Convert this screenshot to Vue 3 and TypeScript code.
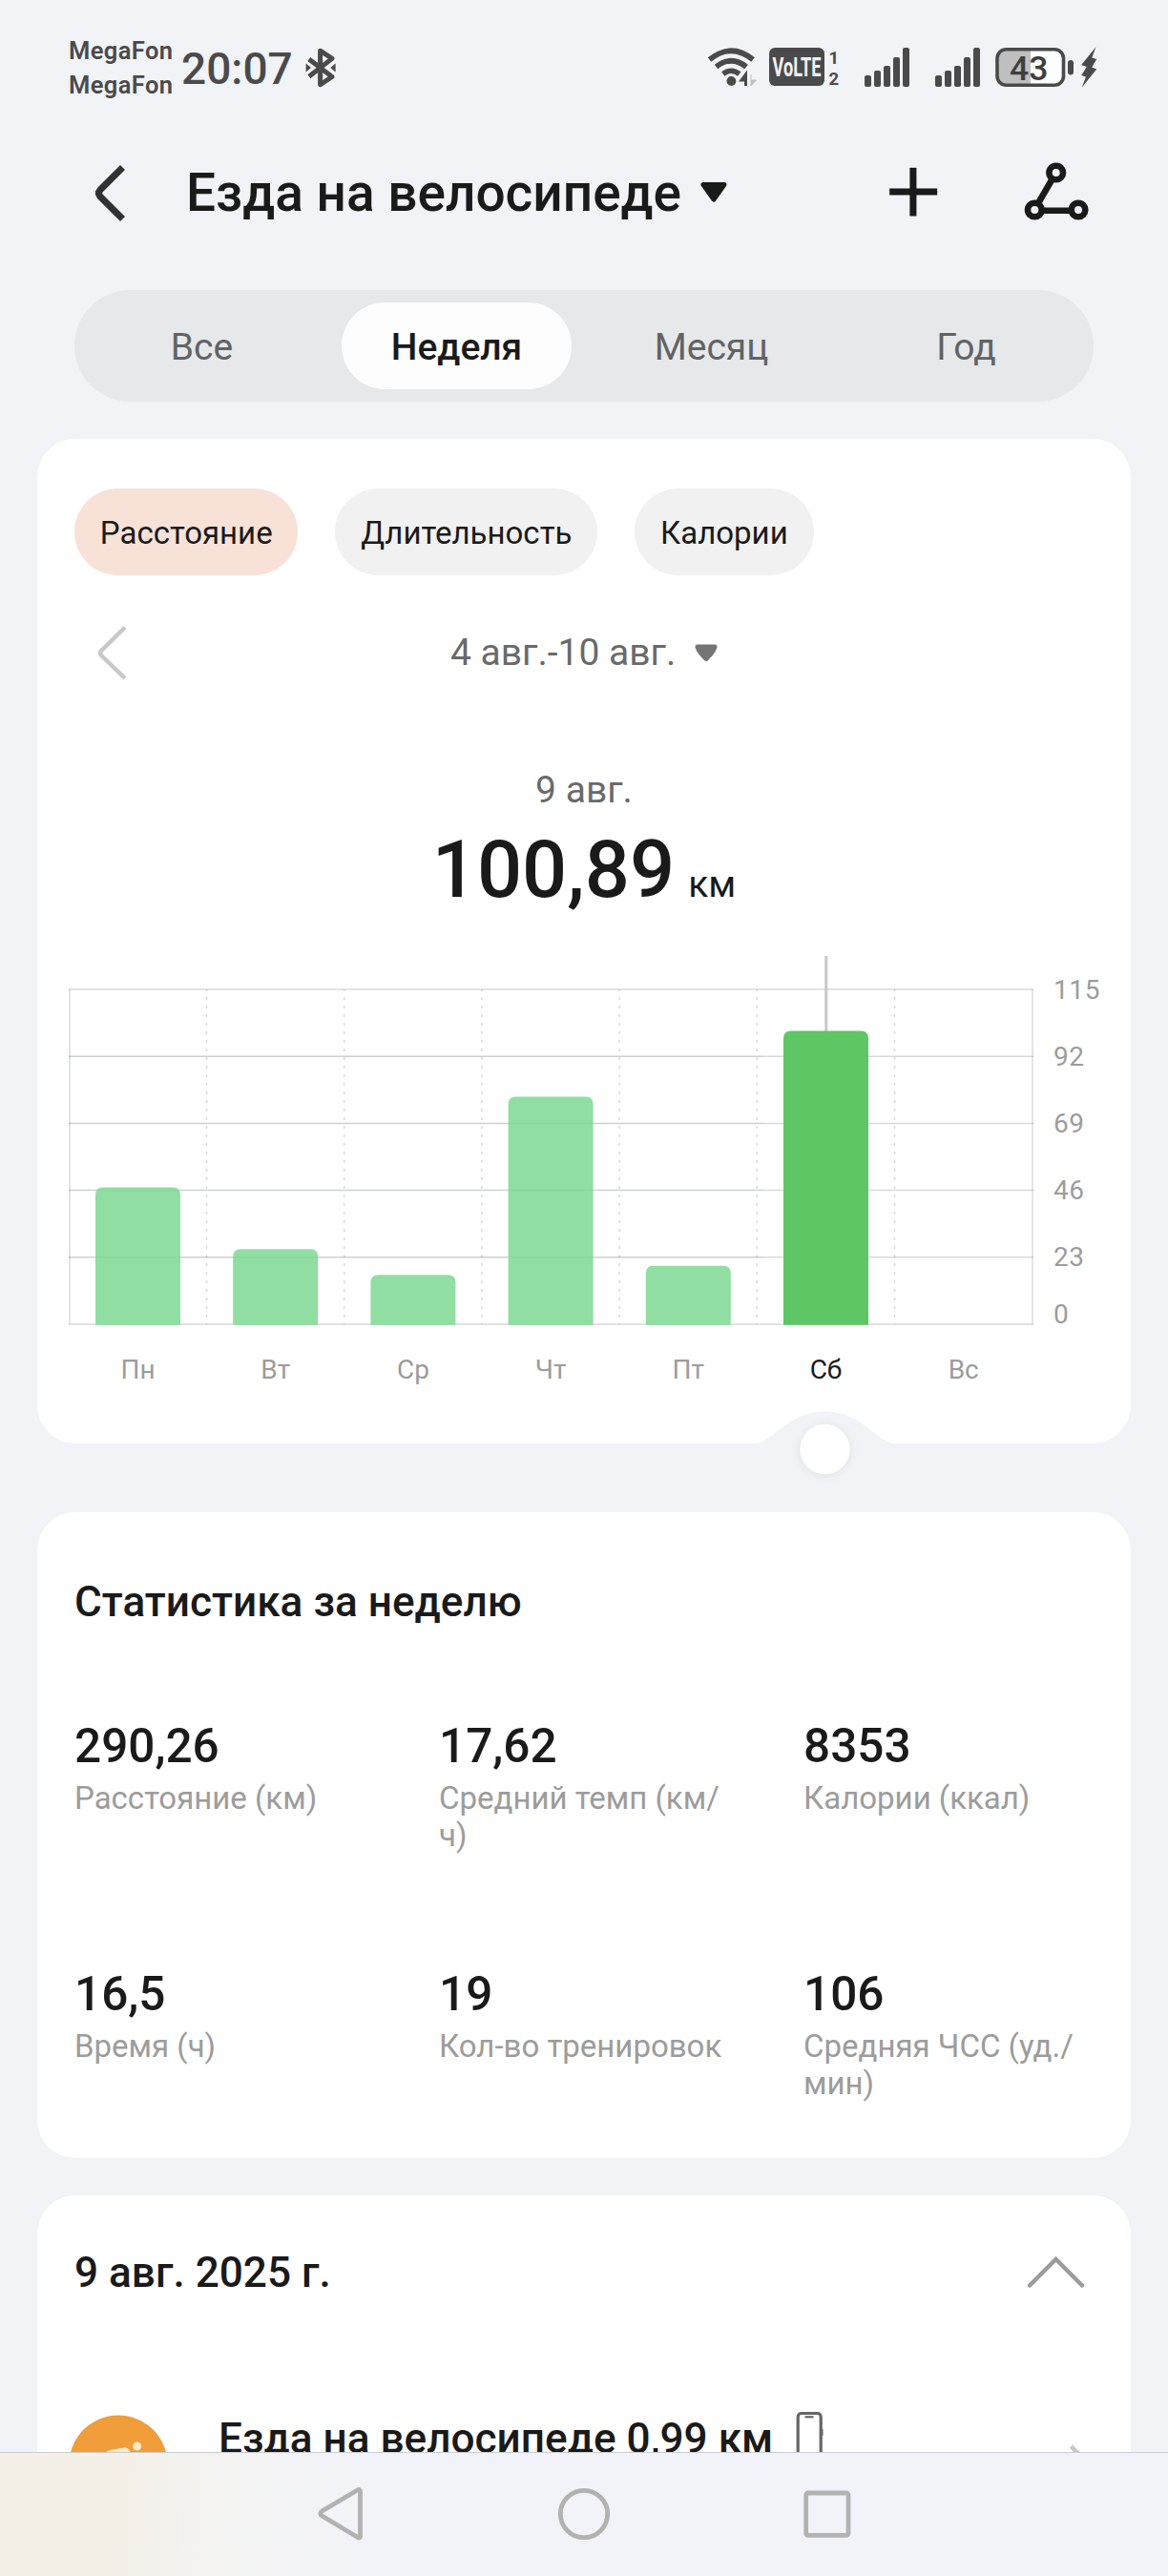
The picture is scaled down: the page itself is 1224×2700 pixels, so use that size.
<script setup lang="ts">
import { ref } from 'vue'

interface Day { label: string; value: number }
interface Stat { value: string; label: string }

const periods: string[] = ['Все', 'Неделя', 'Месяц', 'Год']
const activePeriod = ref(1)

const metrics: string[] = ['Расстояние', 'Длительность', 'Калории']
const activeMetric = ref(0)

const days: Day[] = [
  { label: 'Пн', value: 47.2 },
  { label: 'Вт', value: 26 },
  { label: 'Ср', value: 17.1 },
  { label: 'Чт', value: 78.3 },
  { label: 'Пт', value: 20.2 },
  { label: 'Сб', value: 100.89 },
  { label: 'Вс', value: 0 },
]
const selectedDay = ref(5)

/* Plot geometry, in the units of the chart's viewBox */
const left = 73
const step = 144.2
const bottom = 1388
const rowHeight = 70.2
const barWidth = 89
const ticks: number[] = [0, 23, 46, 69, 92, 115]

const gridY = (i: number): number => bottom - i * rowHeight
const center = (i: number): number => left + step * (i + 0.5) - 0.6
const barTop = (v: number): number => bottom + 0.5 - (v / 115) * rowHeight * 5
const barPath = (i: number, v: number): string => {
  const x = center(i) - barWidth / 2
  const r = 8
  return `M${x} ${bottom + 0.7}V${barTop(v) + r}q0 ${-r} ${r} ${-r}h${barWidth - 2 * r}q${r} 0 ${r} ${r}V${bottom + 0.7}z`
}

const stats: Stat[] = [
  { value: '290,26', label: 'Расстояние (км)' },
  { value: '17,62', label: 'Средний темп (км/\nч)' },
  { value: '8353', label: 'Калории (ккал)' },
  { value: '16,5', label: 'Время (ч)' },
  { value: '19', label: 'Кол-во тренировок' },
  { value: '106', label: 'Средняя ЧСС (уд./\nмин)' },
]

const signalHeights: number[] = [12, 17, 22, 31, 41]
</script>

<template>
  <div class="screen">
    <div class="content">
      <div class="status">
        <div class="carriers"><span>MegaFon</span><span>MegaFon</span></div>
        <div class="clock">20:07</div>
        <svg class="bt" width="34" height="42" viewBox="319 50 34 42">
          <path d="M323.8 62L348 80.5 335.6 88.6V53.2L348 61.4 323.8 80.2" fill="none" stroke="#4a4a4a" stroke-width="5" stroke-linejoin="round" />
          <path d="M320.6 66.5v9l5.4-4.5zM351.6 66.5v9l-5.4-4.5z" fill="#4a4a4a" />
        </svg>
        <div class="gap"></div>
        <svg class="wifi" width="52" height="42" viewBox="741 49 52 42">
          <g fill="none" stroke="#4a4a4a" stroke-width="5.6">
            <path d="M743.5 62.5q22.8-18.5 45.6 0" />
            <path d="M750.5 70q15.8-12.5 31.6 0" />
            <path d="M757.8 77.5q8.5-6.5 17 0" />
          </g>
          <circle cx="766.4" cy="85" r="4.9" fill="#4a4a4a" />
          <path d="M781.5 90V78l-4.500 6h4.500" fill="#4a4a4a" stroke="#4a4a4a" stroke-width="3" />
          <path d="M787 78v12l5.5-6H787" fill="#bdbec0" stroke="#bdbec0" stroke-width="1" />
        </svg>
        <svg class="volte" width="76" height="42" viewBox="805 49 76 42">
          <rect x="806" y="50" width="58" height="40" rx="6" fill="#4a4a4a" />
          <text x="809.5" y="79.5" textLength="51" lengthAdjust="spacingAndGlyphs" font-size="27" font-weight="700" fill="#f1f3f7">VoLTE</text>
          <text x="868.5" y="66.500" font-size="18.500" font-weight="700" fill="#4a4a4a">1</text>
          <text x="868.5" y="88.500" font-size="18.500" font-weight="700" fill="#4a4a4a">2</text>
        </svg>
        <div v-for="n in 2" :key="n" class="signal">
          <i v-for="h in signalHeights" :key="h" :style="{ height: h + 'px' }"></i>
        </div>
        <svg class="battery" width="108" height="44" viewBox="1042 48 108 44">
          <rect x="1045" y="52" width="70" height="37" rx="9" fill="#fdfdfd" />
          <path d="M1080 52h-26q-9 0-9 9v19q0 9 9 9h26z" fill="#bfbfc0" />
          <rect x="1045" y="51.7" width="69.5" height="37.6" rx="9.5" fill="none" stroke="#4a4a4a" stroke-width="3.6" />
          <rect x="1119" y="63" width="6" height="15.5" rx="3" fill="#4a4a4a" />
          <text x="1058" y="84" font-size="35.5" font-weight="500" fill="#3f3f3f">43</text>
          <path d="M1148.500 49.300L1133.200 68l5.600 2-5.600 9 4.800 1.500-4.200 11 15.400-19-5-2 5-8.500-5-1.500z" fill="#4a4a4a" />
        </svg>
      </div>

      <header class="header">
        <svg class="back" width="40" height="64" viewBox="96 170 40 64">
          <path d="M128.500 175.500L105 199q-3 3.500 0 7l23.500 23.500" fill="none" stroke="#303231" stroke-width="7" />
        </svg>
        <h1>Езда на велосипеде</h1>
        <svg class="caret" width="30" height="24" viewBox="733 190 30 24">
          <path d="M737 193.500h22l-11 15.500z" fill="#1a1a1a" stroke="#1a1a1a" stroke-width="5" stroke-linejoin="round" />
        </svg>
        <div class="gap"></div>
        <svg class="plus" width="52" height="52" viewBox="931 174.500 52 52">
          <path d="M932.300 197.200h49.700v6.600h-49.700zM953.600 175.500h6.600v50.300h-6.600z" fill="#1a1a1a" stroke="#1a1a1a" stroke-width=".4" stroke-linejoin="round" />
        </svg>
        <svg class="route" width="70" height="64" viewBox="1072 168 70 64">
          <g fill="none" stroke="#1a1a1a" stroke-width="6.600">
            <path d="M1102.500 188l-14.500 25M1092 220.700h30" />
            <circle cx="1106.700" cy="181" r="7.300" />
            <circle cx="1084.300" cy="220" r="7.300" />
            <circle cx="1130" cy="220" r="7.300" />
          </g>
        </svg>
      </header>

      <nav class="periods">
        <button v-for="(p, i) in periods" :key="p" :class="{ on: i === activePeriod }" @click="activePeriod = i">{{ p }}</button>
      </nav>

      <section class="card chart-card">
        <div class="chips">
          <button v-for="(m, i) in metrics" :key="m" :class="{ on: i === activeMetric }" @click="activeMetric = i">{{ m }}</button>
        </div>
        <div class="range">
          <svg class="prev" width="36" height="62" viewBox="100 652 36 62">
            <path d="M131 656.500L106.200 681q-2.200 2.500 0 5L131 710" fill="none" stroke="#c8c8c8" stroke-width="4.500" />
          </svg>
          <span>4 авг.-10 авг.</span>
          <svg class="drop" width="26" height="20" viewBox="727 673 26 20">
            <path d="M731 677h18q-1 3.500-4 7l-5 5.500-5-5.500q-3-3.500-4-7z" fill="#757575" stroke="#757575" stroke-width="5" stroke-linejoin="round" />
          </svg>
        </div>
        <div class="day">9 авг.</div>
        <div class="total">100,89<small>км</small></div>

        <svg class="chart" width="1146" height="551" viewBox="39 962 1146 551">
          <g stroke="#000" stroke-opacity=".15" stroke-width="1.500">
            <line v-for="i in 6" :key="i" x1="72" x2="1083" :y1="gridY(i - 1)" :y2="gridY(i - 1)" />
            <line v-for="i in 6" :key="'v' + i" :x1="left + step * i - .7" :x2="left + step * i - .7" y1="1037" y2="1388" stroke-dasharray="3 6" stroke-dashoffset="1" />
          </g>
          <g fill="#000" fill-opacity=".1">
            <rect x="72" y="1037" width="2" height="351" />
            <rect x="1081" y="1037" width="2" height="351" />
          </g>
          <line :x1="center(selectedDay) + .3" :x2="center(selectedDay) + .3" y1="1002" y2="1090" stroke="#c8c8c8" stroke-width="3" />
          <template v-for="(d, i) in days" :key="d.label">
            <path v-if="d.value" :d="barPath(i, d.value)" :fill="i === selectedDay ? '#5ec664' : '#90dea2'" />
            <text :x="center(i)" y="1444.500" text-anchor="middle" :class="['label', { on: i === selectedDay }]">{{ d.label }}</text>
          </template>
          <line v-for="i in 4" :key="'o' + i" x1="72" x2="800" :y1="gridY(i)" :y2="gridY(i)" stroke="#2f8f45" stroke-opacity=".07" stroke-width="1.500" />
          <text v-for="(t, i) in ticks" :key="t" x="1104" :y="i ? gridY(i) + 9.500 : 1386.500" class="tick">{{ t }}</text>
          <path d="M786 1514C812 1514 822 1479.500 864.500 1479.500S917 1514 943 1514z" fill="#f1f3f7" />
          <circle class="knob" cx="864.500" cy="1519" r="26.200" fill="#fff" />
        </svg>
      </section>

      <section class="card stats-card">
        <h2>Статистика за неделю</h2>
        <div class="stats">
          <div v-for="s in stats" :key="s.label" class="stat">
            <strong>{{ s.value }}</strong>
            <span>{{ s.label }}</span>
          </div>
        </div>
      </section>

      <section class="card log-card">
        <div class="log-head">
          <h2>9 авг. 2025 г.</h2>
          <svg class="fold" width="62" height="38" viewBox="1076 2361 62 38">
            <path d="M1079 2394.500l27.500-27.500 27.500 27.500" fill="none" stroke="#9c9c9c" stroke-width="4.500" stroke-linecap="round" />
          </svg>
        </div>
        <div class="entry">
          <svg class="badge" width="104" height="104" viewBox="72 2530.500 104 104">
            <circle cx="124" cy="2582.500" r="51.500" fill="#f19d39" />
            <path d="M109 2573q2-4.500 7-5.500l13-2.500q5-1 7 3.500l5 9h8v5h-11l-6-8-9 8 9 9v17h-6v-14l-15-12q-4-4-2-9z" fill="#fdeacb" />
            <circle cx="143.600" cy="2563.500" r="4.500" fill="#fdeacb" />
            <circle cx="104" cy="2599" r="12" fill="none" stroke="#fdeacb" stroke-width="5" />
            <circle cx="146" cy="2599" r="12" fill="none" stroke="#fdeacb" stroke-width="5" />
          </svg>
          <h2>Езда на велосипеде 0,99 км</h2>
          <svg class="phone" width="30" height="56" viewBox="833 2526 30 56">
            <rect x="836.200" y="2529.500" width="24" height="50" rx="3.500" fill="none" stroke="#666" stroke-width="3.200" />
            <path d="M843.500 2533.300h9" stroke="#666" stroke-width="2.200" />
            <path d="M861.800 2546v7" stroke="#666" stroke-width="1.400" />
          </svg>
          <svg class="go" width="20" height="40" viewBox="1119 2560 20 40">
            <path d="M1122.500 2564l14 15-14 15" fill="none" stroke="#c8c8c8" stroke-width="4.500" />
          </svg>
        </div>
      </section>
    </div>

    <footer class="system">
      <svg width="52" height="58" viewBox="331 2606 52 58"><path d="M377.500 2611.500v46.500q0 3-3 1.300l-37-22.300q-3.500-2.500 0-5l37-22q3-1.500 3 1.500z" fill="none" stroke="#b2b2b2" stroke-width="4.800" /></svg>
      <svg width="56" height="58" viewBox="583.500 2605.500 56 58"><circle cx="611.500" cy="2634.500" r="24.700" fill="none" stroke="#b2b2b2" stroke-width="4.800" /></svg>
      <svg width="52" height="58" viewBox="841.300 2605.500 52 58"><rect x="845" y="2612.500" width="44.300" height="44.300" rx="2" fill="none" stroke="#b2b2b2" stroke-width="4.800" /></svg>
    </footer>
  </div>
</template>

<style>
body { background: #f1f3f7; }
</style>

<style scoped>
.screen { width: 1224px; height: 2700px; overflow: hidden; display: flex; flex-direction: column; background: #f1f3f7; color: #1a1a1a; font-family: Roboto, "Liberation Sans", sans-serif; }
.content { height: 2570px; flex: none; overflow: hidden; }
svg { display: block; flex: none; }
h1, h2 { margin: 0; font-weight: 500; white-space: nowrap; }
button { border: 0; margin: 0; padding: 0; background: none; font: inherit; color: inherit; }
.gap { flex: 1; }

.status { height: 140px; box-sizing: border-box; padding: 0 74px 0 72px; display: flex; align-items: flex-start; color: #4a4a4a; font-weight: 500; }
.carriers { display: flex; flex-direction: column; width: 118px; margin-top: 35px; font-size: 25.500px; line-height: 36px; font-weight: 600; letter-spacing: .4px; }
.clock { width: 129px; margin-top: 42px; line-height: 60px; font-size: 46px; white-space: nowrap; }
.bt { margin-top: 50px; }
.wifi { margin: 49px 12px 0 0; }
.volte { margin: 49px 25px 0 0; overflow: visible; }
.signal { display: flex; align-items: flex-end; gap: 3.500px; height: 41px; width: 47px; margin: 50px 27px 0 0; }
.signal i { width: 6.500px; border-radius: 2px; background: #4a4a4a; }
.signal + .battery { margin: 48px 0 0 -12px; }

.header { height: 124px; box-sizing: border-box; padding: 0 82px 0 96px; display: flex; align-items: center; }
h1 { margin-left: 59px; width: 518px; line-height: 80px; font-size: 55px; }
.caret { margin-left: 20px; }
.plus { margin: -3px 89px 0 0; }
.route { margin-top: -4px; }

.periods { margin: 40px 78px 0; height: 117px; border-radius: 59px; background: #e6e8ea; display: flex; color: #616365; font-size: 39px; }
.periods button { flex: 1; margin: 13px; border-radius: 46px; height: 91px; line-height: 95px; }
.periods .on { background: #fdfdfd; color: #1a1a1a; font-weight: 500; }

.card { margin: 39px 39px 0; border-radius: 40px; background: #fff; box-sizing: border-box; }
.chart-card { height: 1053px; padding-top: 52px; }
.chips { display: flex; gap: 39px; padding-left: 39px; }
.chips button { height: 91px; padding: 0 26.800px; border-radius: 46px; background: #f1f1f1; font-size: 33px; line-height: 93px; }
.chips .on { background: #f8e2d8; }
.range { margin-top: 41px; height: 80px; display: flex; align-items: center; color: #6a6a6a; font-size: 39px; }
.prev { margin: 0 336px 0 61px; }
.range span { width: 238px; white-space: nowrap; }
.drop { margin-left: 17px; }
.day { margin-top: 79px; text-align: center; line-height: 50px; font-size: 39px; color: #6a6a6a; }
.total { margin-top: 9px; height: 100px; line-height: 100px; text-align: center; font-size: 83px; font-weight: 500; }
.total small { margin-left: 14px; font-size: 39px; font-weight: 400; }
.chart { overflow: visible; }
.label { font-size: 28px; fill: #9c9c9c; }
.label.on { fill: #1a1a1a; }
.tick { font-size: 28px; fill: #9c9c9c; letter-spacing: .6px; }
.knob { filter: drop-shadow(0 1px 5px rgba(0, 0, 0, .08)); }

.stats-card { margin-top: 72px; height: 677px; padding: 64px 0 0 39px; }
.card h2 { line-height: 60px; font-size: 44.150px; }
.stats { margin-top: 92px; display: grid; grid-template-columns: repeat(3, 382px); row-gap: 118px; }
.stat { height: 142px; }
.stat strong { display: block; line-height: 58px; font-size: 49.500px; font-weight: 500; }
.stat span { display: block; margin-top: 6px; line-height: 39px; font-size: 33px; color: #9c9c9c; white-space: pre; }

.log-card { height: 420px; padding-top: 51px; }
.log-head { display: flex; justify-content: space-between; align-items: center; padding: 0 47px 0 39px; }
.fold { margin-top: -3px; }
.entry { margin: 119px 46px 0 33px; display: flex; align-items: flex-start; }
.entry h2 { margin: -5px 0 0 53px; width: 581px; padding-left: 0; }
.phone { margin: -5px auto 0 23px; }
.go { margin-top: 29px; }

.system { flex: 1; box-sizing: border-box; border-top: 1px solid #cbccd0; display: flex; align-items: center; justify-content: space-between; padding: 0 331px 2px; background: linear-gradient(94deg, #f4f0e7 0, #f4f0e8 130px, #f3f3f2 240px, #f2f3f8 390px); }
</style>
